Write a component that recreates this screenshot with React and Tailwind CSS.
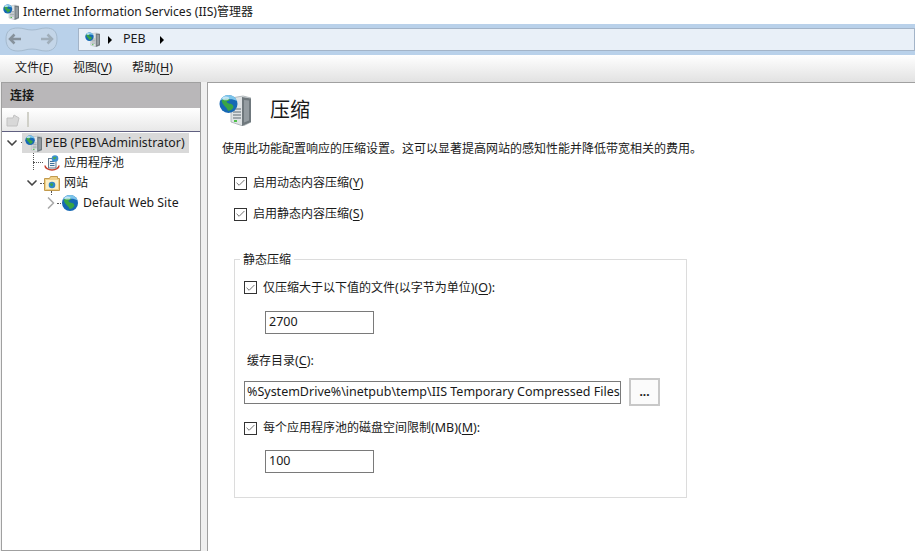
import React from "react";
import { Check, ChevronDown, ChevronRight } from "lucide-react";

const font = "font-['Noto_Sans','Noto_Sans_CJK_SC',sans-serif]";

function GlobeShape({ cx, cy, r }) {
  return (
    <g transform={`translate(${cx - r} ${cy - r}) scale(${r / 8})`}>
      <circle cx="8" cy="8" r="8" fill="#1668b4" />
      <path d="M8 0a8 8 0 0 1 7.600 5.500C13 4 10 3.500 8 4 6 3.500 3.500 4 .9 4.500A8 8 0 0 1 8 0z" fill="#7cc4ea" />
      <path d="M2 4.500c2-1.500 5-2 7-.8.500 1-1.500 1.700-2.500 1.800-.3 1 .8 1.700 2.300 2.200 2.500 0 4 1.500 3.500 3.600-1.300 1.800-3.300 3-4.800 2.700-.3-1.800-1.800-2.800-2.800-4C3.200 8.600 1.700 6.500 2 4.500z" fill="#3aa544" />
      <ellipse cx="5.500" cy="3" rx="3" ry="1.600" fill="#d8f0fb" opacity="0.75" />
    </g>
  );
}

// globe in front of a server tower, same drawing at every size
function ServerGlobe({ size = 20 }) {
  return (
    <svg width={size} height={size} viewBox="0 0 32 32" className="shrink-0">
      <path d="M12 4l12-2 8 2v24l-8 4-12-4z" fill="#dfe3e5" stroke="#9aa2a6" strokeWidth="0.7" />
      <path d="M23 3l9 1.500v23.500l-9 4z" fill="#6f787d" />
      <path d="M25 6l5 .5v20l-5 2z" fill="#949ca1" />
      <path d="M14 15h8M14 18h8M14 21h8M14 24h8" stroke="#8b9499" strokeWidth="1.300" />
      <rect x="15" y="26" width="3" height="2" fill="#4fc04a" />
      <GlobeShape cx={9.500} cy={10} r={9} />
    </svg>
  );
}

function Globe({ size = 16 }) {
  return (
    <svg width={size} height={size} viewBox="0 0 16 16" className="shrink-0">
      <GlobeShape cx={8} cy={8} r={8} />
    </svg>
  );
}

function PoolIcon() {
  return (
    <svg width="16" height="16" viewBox="0 0 16 16" className="shrink-0">
      <path d="M1 10.500a7 4.500 0 0 0 14 0" fill="none" stroke="#c8402f" strokeWidth="1.500" />
      <rect x="4.500" y="3.500" width="7.500" height="9.500" fill="#eef2f5" stroke="#64798a" />
      <path d="M6 6.500h4.500M6 8.500h4.500M6 10.500h4.500" stroke="#3f6f99" />
      <circle cx="11" cy="3.500" r="3.300" fill="#3d8fd1" />
      <path d="M9 2.500c1-1 3-1 3.500 0-.5 1-1.500 1-1.500 2-1 0-2-1-2-2z" fill="#4bab50" />
    </svg>
  );
}

function FolderIcon() {
  return (
    <svg width="16" height="16" viewBox="0 0 16 16" className="shrink-0">
      <path d="M.5 3.500h5l1-2h7v2h2v12H.5z" fill="#f0d189" stroke="#c29a4c" />
      <rect x="2" y="5" width="12" height="9" fill="#fbefc6" />
      <circle cx="8" cy="10" r="3.300" fill="#2f86c9" />
      <path d="M5.800 9c1-1 3-1 3.200 0s-1 3-2 2z" fill="#3ba845" />
    </svg>
  );
}

function Latin({ children }) {
  return <span className="text-[12.5px]">{children}</span>;
}

function Accel({ letter, tail = "" }) {
  return (
    <span className="text-[12.5px]">
      (<span className="underline underline-offset-2">{letter}</span>){tail}
    </span>
  );
}

function CheckRow({ children, className = "" }) {
  return (
    <div className={`flex items-center gap-[6px] ${className}`}>
      <span className="flex h-[13px] w-[13px] shrink-0 items-center justify-center border border-[#333] bg-white">
        <Check size={12} strokeWidth={1.500} className="text-[#333]" />
      </span>
      <span>{children}</span>
    </div>
  );
}

function TextBox({ children, className = "" }) {
  return (
    <div className={`flex h-[23px] items-center overflow-hidden whitespace-nowrap border border-[#7a7a7a] text-[12.5px] ${className}`}>
      {children}
    </div>
  );
}

export default function App() {
  return (
    <div className={`${font} flex h-[551px] w-[915px] flex-col overflow-hidden bg-white text-[12px] text-[#1a1a1a]`}>
      {/* title bar */}
      <div className="flex h-[24px] items-center gap-[4px] pl-[3px]">
        <ServerGlobe size={16} />
        <span><span className="text-[12.2px]">Internet Information Services (IIS)</span>管理器</span>
      </div>

      {/* address bar */}
      <div className="flex h-[31px] items-center bg-[#b9d1ea] pl-[4px]">
        <svg width="55" height="27" viewBox="0 0 55 27" className="shrink-0">
          <path d="M2 13C2 5 6 2 14 2c6 0 8 2 14 2s8-2 14-2c7 0 11 3 11 11s-4 12-11 12c-6 0-8-2-14-2s-8 2-14 2C6 25 2 21 2 13z" fill="#c3d5e8" stroke="#a5bace" />
          <path d="M17 13H6m4.500-4.500L6 13l4.500 4.500" fill="none" stroke="#87929c" strokeWidth="2.500" />
          <path d="M37 13h11m-4.500-4.500L48 13l-4.500 4.500" fill="none" stroke="#a0aeba" strokeWidth="2.500" />
        </svg>
        <div className="ml-[19px] flex h-[23px] flex-1 items-center border border-[#a3b4c8] bg-[#e9f0f8] pl-[6px]">
          <ServerGlobe size={15} />
          <span className="ml-[8px] h-0 w-0 border-y-[4px] border-l-[4px] border-y-transparent border-l-black" />
          <span className="ml-[11px]"><Latin>PEB</Latin></span>
          <span className="ml-[14px] h-0 w-0 border-y-[4px] border-l-[4px] border-y-transparent border-l-black" />
        </div>
      </div>

      {/* menu */}
      <div className="flex h-[27px] items-center gap-[20px] bg-gradient-to-b from-white to-[#e2e2e2] pl-[15px]">
        <span>文件<Accel letter="F" /></span>
        <span>视图<Accel letter="V" /></span>
        <span>帮助<Accel letter="H" /></span>
      </div>

      <div className="flex min-h-0 flex-1 bg-[#f0f0f0]">
        {/* connections panel */}
        <div className="ml-[1px] w-[200px] border border-[#a0a0a0] bg-white">
          <div className="flex h-[25px] items-center bg-[#b9b7b9] pl-[8px] font-bold">连接</div>
          <div className="flex h-[24px] items-center gap-[6px] border-b border-[#5f5f80] bg-gradient-to-b from-white to-[#e8e8e8] pl-[4px]">
            <svg width="15" height="14" viewBox="0 0 15 14">
              <path d="M1 5h6l1-3 5 3-2 8H1z" fill="#d8d8d8" stroke="#c2c2c2" />
            </svg>
            <span className="h-[15px] w-[2px] bg-[#d0d0c8]" />
          </div>
          <div className="relative pt-[1px]">
            {/* tree connector dots */}
            <span className="absolute left-[19px] top-[10px] w-[4px] border-t border-dotted border-[#555]" />
            <span className="absolute left-[31px] top-[20px] h-[18px] border-l border-dotted border-[#555]" />
            <span className="absolute left-[31px] top-[30px] w-[10px] border-t border-dotted border-[#555]" />
            <span className="absolute left-[38px] top-[51px] w-[4px] border-t border-dotted border-[#555]" />
            <span className="absolute left-[49px] top-[59px] h-[4px] border-l border-dotted border-[#555]" />
            <span className="absolute left-[55px] top-[71px] w-[4px] border-t border-dotted border-[#555]" />

            <div className="flex h-[20px] items-center pl-[2px]">
              <ChevronDown size={16} strokeWidth={2.500} className="text-[#444]" />
              <div className="relative ml-[2px] flex h-[20px] w-[167px] items-center bg-[#d9d9d9] pl-[3px]">
                <ServerGlobe size={17} />
                <span className="ml-[3px] text-[12.3px]">PEB (PEB\Administrator)</span>
              </div>
            </div>
            <div className="relative flex h-[20px] items-center pl-[42px]">
              <PoolIcon />
              <span className="ml-[4px]">应用程序池</span>
            </div>
            <div className="flex h-[20px] items-center pl-[22px]">
              <ChevronDown size={16} strokeWidth={2.500} className="text-[#444]" />
              <span className="relative ml-[4px]"><FolderIcon /></span>
              <span className="ml-[4px]">网站</span>
            </div>
            <div className="flex h-[20px] items-center pl-[39px]">
              <ChevronRight size={20} strokeWidth={2} className="text-[#aaa]" />
              <span className="relative ml-[1px]"><Globe /></span>
              <span className="ml-[5px] text-[12.3px]">Default Web Site</span>
            </div>
          </div>
        </div>

        {/* compression page */}
        <div className="ml-[6px] flex-1 border-l border-t border-[#a0a0a0] bg-white pl-[11px]">
          <div className="flex h-[44px] items-center pt-[10px]">
            <ServerGlobe size={32} />
            <span className="ml-[19px] text-[20px]">压缩</span>
          </div>
          <p className="ml-[3px] mt-[14px] leading-[16px]">使用此功能配置响应的压缩设置。这可以显著提高网站的感知性能并降低带宽相关的费用。</p>
          <div className="ml-[15px] mt-[17px]">
            <CheckRow>启用动态内容压缩<Accel letter="Y" /></CheckRow>
            <CheckRow className="mt-[12px]">启用静态内容压缩<Accel letter="S" /></CheckRow>
          </div>

          {/* static compression group */}
          <div className="relative ml-[15px] mt-[35px] h-[239px] w-[453px] border border-[#dcdcdc] pl-[9px] pt-[19px]">
            <span className="absolute -top-[9px] left-[5px] bg-white px-[3px]">静态压缩</span>
            <CheckRow>仅压缩大于以下值的文件<Latin>(</Latin>以字节为单位<Latin>)</Latin><Accel letter="O" tail=":" /></CheckRow>
            <TextBox className="ml-[21px] mt-[14px] w-[109px] pl-[3px]">2700</TextBox>
            <div className="ml-[3px] mt-[18px]">缓存目录<Accel letter="C" tail=":" /></div>
            <div className="mt-[7px] flex items-center">
              <TextBox className="w-[377px] pl-[2px]">%SystemDrive%\inetpub\temp\IIS Temporary Compressed Files</TextBox>
              <div className="ml-[8px] flex h-[28px] w-[31px] items-center justify-center border-2 border-[#c8c8c8] bg-[#fbfbfb] font-bold leading-none">...</div>
            </div>
            <CheckRow className="mt-[13px]">每个应用程序池的磁盘空间限制<Latin>(MB)</Latin><Accel letter="M" tail=":" /></CheckRow>
            <TextBox className="ml-[21px] mt-[12px] w-[109px] pl-[3px]">100</TextBox>
          </div>
        </div>
      </div>
    </div>
  );
}
